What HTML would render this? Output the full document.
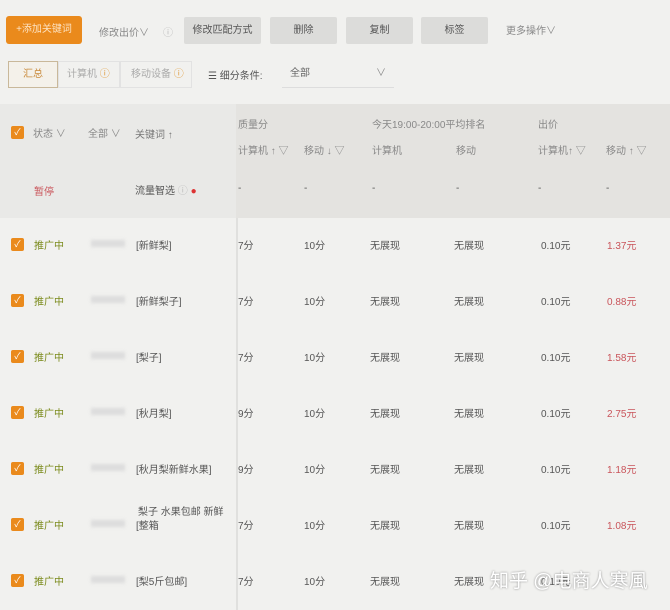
<!DOCTYPE html>
<html><head><meta charset="utf-8"><style>
*{margin:0;padding:0;box-sizing:border-box}
body{width:670px;height:610px;background:#f1f1ef;font-family:"Liberation Sans","Noto Sans CJK SC",sans-serif;font-size:10px;color:#555;position:relative;overflow:hidden}
.a{position:absolute;white-space:nowrap}
.btn{position:absolute;top:17px;height:27px;background:#dcdcda;border-radius:2px;color:#555;font-size:10px;text-align:center;line-height:27px}
.cb{position:absolute;width:13px;height:13px;background:#ea8a1c;border-radius:2px;color:#fff;font-size:9px;line-height:13px;text-align:center}
.g{color:#7a8a1a}
.r{color:#c9545a}
.blur{position:absolute;width:34px;height:7px;background:#dcdcdc;filter:blur(1.5px)}
</style></head><body>
<div class="a" style="left:6px;top:16px;width:76px;height:28px;background:#ea8a1c;border-radius:3px;color:#fde3c3;line-height:28px;text-align:center">+添加关键词</div>
<div class="a" style="left:99px;top:24px;color:#888">修改出价∨</div>
<div class="a" style="left:163px;top:24px;color:#bbb">ⓘ</div>
<div class="btn" style="left:184px;width:77px">修改匹配方式</div>
<div class="btn" style="left:270px;width:67px">删除</div>
<div class="btn" style="left:346px;width:67px">复制</div>
<div class="btn" style="left:421px;width:67px">标签</div>
<div class="a" style="left:506px;top:22px;color:#888">更多操作∨</div>
<div class="a" style="left:8px;top:61px;width:50px;height:27px;border:1px solid #c9b89a;background:#f4f1ea;color:#c98a3a;text-align:center;line-height:25px">汇总</div>
<div class="a" style="left:58px;top:61px;width:62px;height:27px;border:1px solid #e2e2e2;color:#aaa;line-height:25px;padding-left:8px">计算机 <span style="color:#e09a3a">ⓘ</span></div>
<div class="a" style="left:120px;top:61px;width:72px;height:27px;border:1px solid #e2e2e2;color:#aaa;line-height:25px;padding-left:10px">移动设备 <span style="color:#e09a3a">ⓘ</span></div>
<div class="a" style="left:208px;top:67px;color:#555">☰ 细分条件:</div>
<div class="a" style="left:282px;top:61px;width:112px;height:27px;border-bottom:1px solid #ddd;color:#666;line-height:25px;padding-left:8px">全部<span style="position:absolute;right:8px;color:#888">∨</span></div>
<div class="a" style="left:0;top:104px;width:670px;height:114px;background:#e9e9e7"></div>
<div class="a" style="left:236px;top:104px;width:434px;height:114px;background:#e4e3e0"></div>
<div class="cb" style="left:11px;top:126px">✓</div>
<div class="a" style="left:33px;top:125px;color:#888">状态 ∨</div>
<div class="a" style="left:88px;top:125px;color:#888">全部 ∨</div>
<div class="a" style="left:135px;top:126px;color:#777">关键词 ↑</div>
<div class="a" style="left:238px;top:116px;color:#888">质量分</div>
<div class="a" style="left:372px;top:116px;color:#888">今天19:00-20:00平均排名</div>
<div class="a" style="left:538px;top:116px;color:#888">出价</div>
<div class="a" style="left:238px;top:142px;color:#888">计算机 ↑ ▽</div>
<div class="a" style="left:304px;top:142px;color:#888">移动 ↓ ▽</div>
<div class="a" style="left:372px;top:142px;color:#888">计算机</div>
<div class="a" style="left:456px;top:142px;color:#888">移动</div>
<div class="a" style="left:538px;top:142px;color:#888">计算机↑ ▽</div>
<div class="a" style="left:606px;top:142px;color:#888">移动 ↑ ▽</div>
<div class="a r" style="left:34px;top:183px">暂停</div>
<div class="a" style="left:135px;top:182px;color:#555">流量智选 <span style="color:#bbb">ⓘ</span> <span style="color:#d33">●</span></div>
<div class="a" style="left:238px;top:183px">-</div><div class="a" style="left:304px;top:183px">-</div><div class="a" style="left:372px;top:183px">-</div><div class="a" style="left:456px;top:183px">-</div><div class="a" style="left:538px;top:183px">-</div><div class="a" style="left:606px;top:183px">-</div>
<div class="a" style="left:236px;top:218px;width:2px;height:392px;background:#e0e0de"></div>

<div id="rows"></div>
<script>
var d=[["[新鲜梨]","7分","1.37元"],["[新鲜梨子]","7分","0.88元"],["[梨子]","7分","1.58元"],["[秋月梨]","9分","2.75元"],["[秋月梨新鲜水果]","9分","1.18元"],["[整箱","7分","1.08元"],["[梨5斤包邮]","7分","0.?元"]];
var h="";d.forEach(function(r,i){var y=237+i*56;
h+='<div class="cb" style="left:11px;top:'+(y+1)+'px">✓</div><div class="a g" style="left:34px;top:'+y+'px">推广中</div><div class="blur" style="left:91px;top:'+(y+3)+'px"></div>';
if(i==5)h+='<div class="a" style="left:138px;top:'+(y-14)+'px">梨子 水果包邮 新鲜</div>';
h+='<div class="a" style="left:136px;top:'+y+'px">'+r[0]+'</div><div class="a" style="left:238px;top:'+y+'px">'+r[1]+'</div><div class="a" style="left:304px;top:'+y+'px">10分</div><div class="a" style="left:370px;top:'+y+'px">无展现</div><div class="a" style="left:454px;top:'+y+'px">无展现</div><div class="a" style="left:541px;top:'+y+'px">0.10元</div><div class="a r" style="left:607px;top:'+y+'px">'+(i<6?r[2]:'')+'</div>';});
document.getElementById("rows").innerHTML=h;
</script>
<div class="a" style="left:490px;top:566px;font-size:19px;color:#fff;text-shadow:0 0 2px #888">知乎 @电商人寒風</div>
</body></html>
